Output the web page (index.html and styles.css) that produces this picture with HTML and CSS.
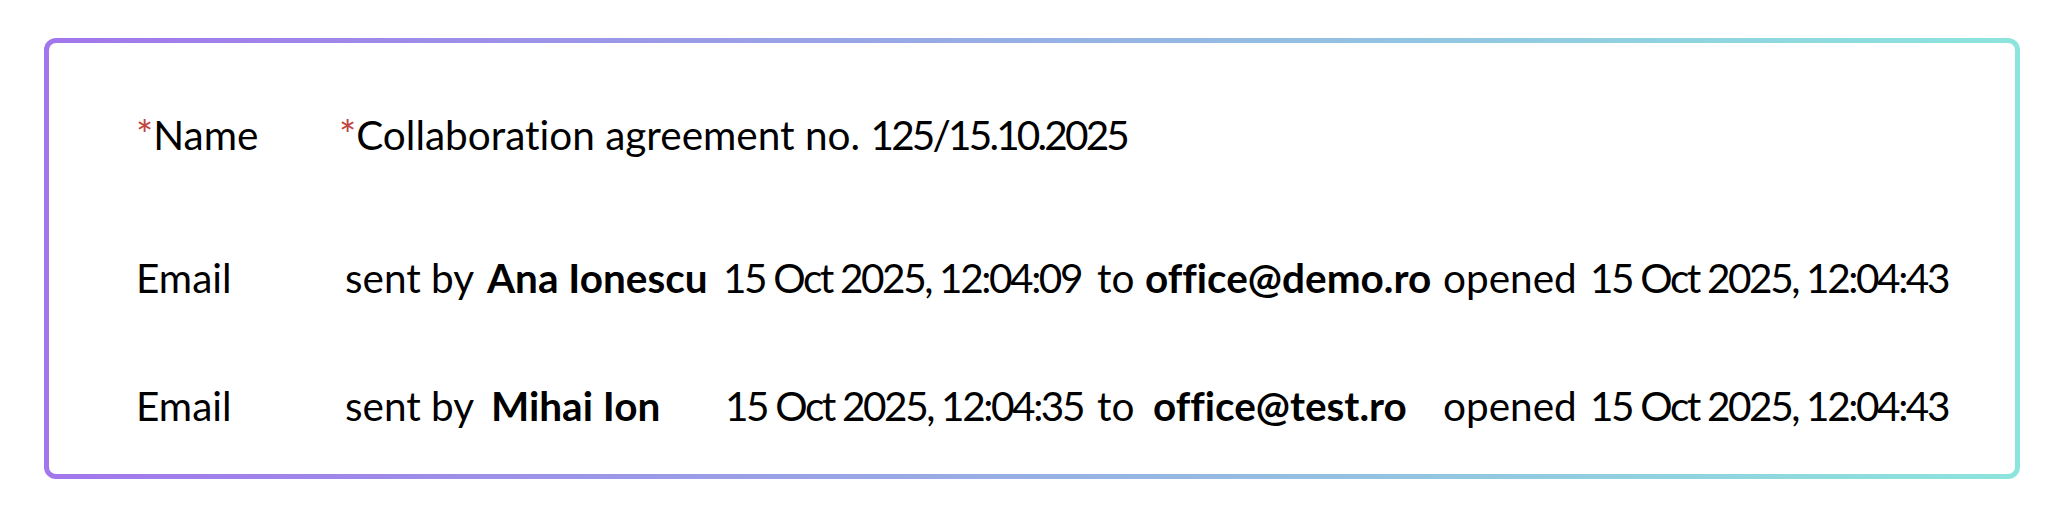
FILE: index.html
```html
<!DOCTYPE html>
<html lang="en">
<head>
<meta charset="utf-8">
<title>Document</title>
<link rel="stylesheet" href="styles.css">
</head>
<body>
<section class="card">
  <div class="row row-name">
    <div class="label"><span class="req">*</span>Name</div>
    <div class="value"><span class="req">*</span>Collaboration agreement no. <span class="num">125/15.10.2025</span></div>
  </div>
  <div class="row row-email">
    <div class="label">Email</div>
    <div class="c-sent">sent by</div>
    <div class="c-name"><b>Ana Ionescu</b></div>
    <div class="c-date">15 Oct 2025, 12:04:09</div>
    <div class="c-to">to</div>
    <div class="c-mail"><b>office@demo.ro</b></div>
    <div class="c-opened">opened</div>
    <div class="c-date">15 Oct 2025, 12:04:43</div>
  </div>
  <div class="row row-email row-alt">
    <div class="label">Email</div>
    <div class="c-sent">sent by</div>
    <div class="c-name"><b>Mihai Ion</b></div>
    <div class="c-date">15 Oct 2025, 12:04:35</div>
    <div class="c-to">to</div>
    <div class="c-mail"><b>office@test.ro</b></div>
    <div class="c-opened">opened</div>
    <div class="c-date">15 Oct 2025, 12:04:43</div>
  </div>
</section>
</body>
</html>
```
FILE: styles.css
```css
html, body {
  margin: 0;
  padding: 0;
  background: #ffffff;
}
body {
  font-family: "Lato", "Liberation Sans", sans-serif;
  font-variant-ligatures: none;
  color: #000;
  font-size: 40.5px;
}
.card {
  box-sizing: border-box;
  margin: 38px 0 0 44px;
  width: 1976px;
  height: 441px;
  border: 5px solid transparent;
  border-radius: 12px;
  background:
    linear-gradient(#fff, #fff) padding-box,
    linear-gradient(90deg, #a276ec 0%, #97b0e4 50%, #8ce5dd 100%) border-box;
  padding: 66px 0 0 87px;
}
.row {
  height: 50px;
  display: grid;
  align-items: center;
  white-space: nowrap;
}
.row-name {
  grid-template-columns: 203px auto;
}
.row-email {
  grid-template-columns: 209px 142px 236px 374px 48px 298px 147px auto;
  margin-top: 93px;
}
.row-email + .row-email {
  margin-top: 78px;
}
.req {
  color: #c0443f;
}
b {
  font-weight: 700;
}
.num {
  letter-spacing: -2.8px;
}
.c-date {
  letter-spacing: -2.4px;
}
.row-alt .c-name {
  padding-left: 4px;
}
.row-alt .c-date:nth-child(4) {
  padding-left: 2px;
}
.row-alt .c-mail {
  padding-left: 8px;
}
```
